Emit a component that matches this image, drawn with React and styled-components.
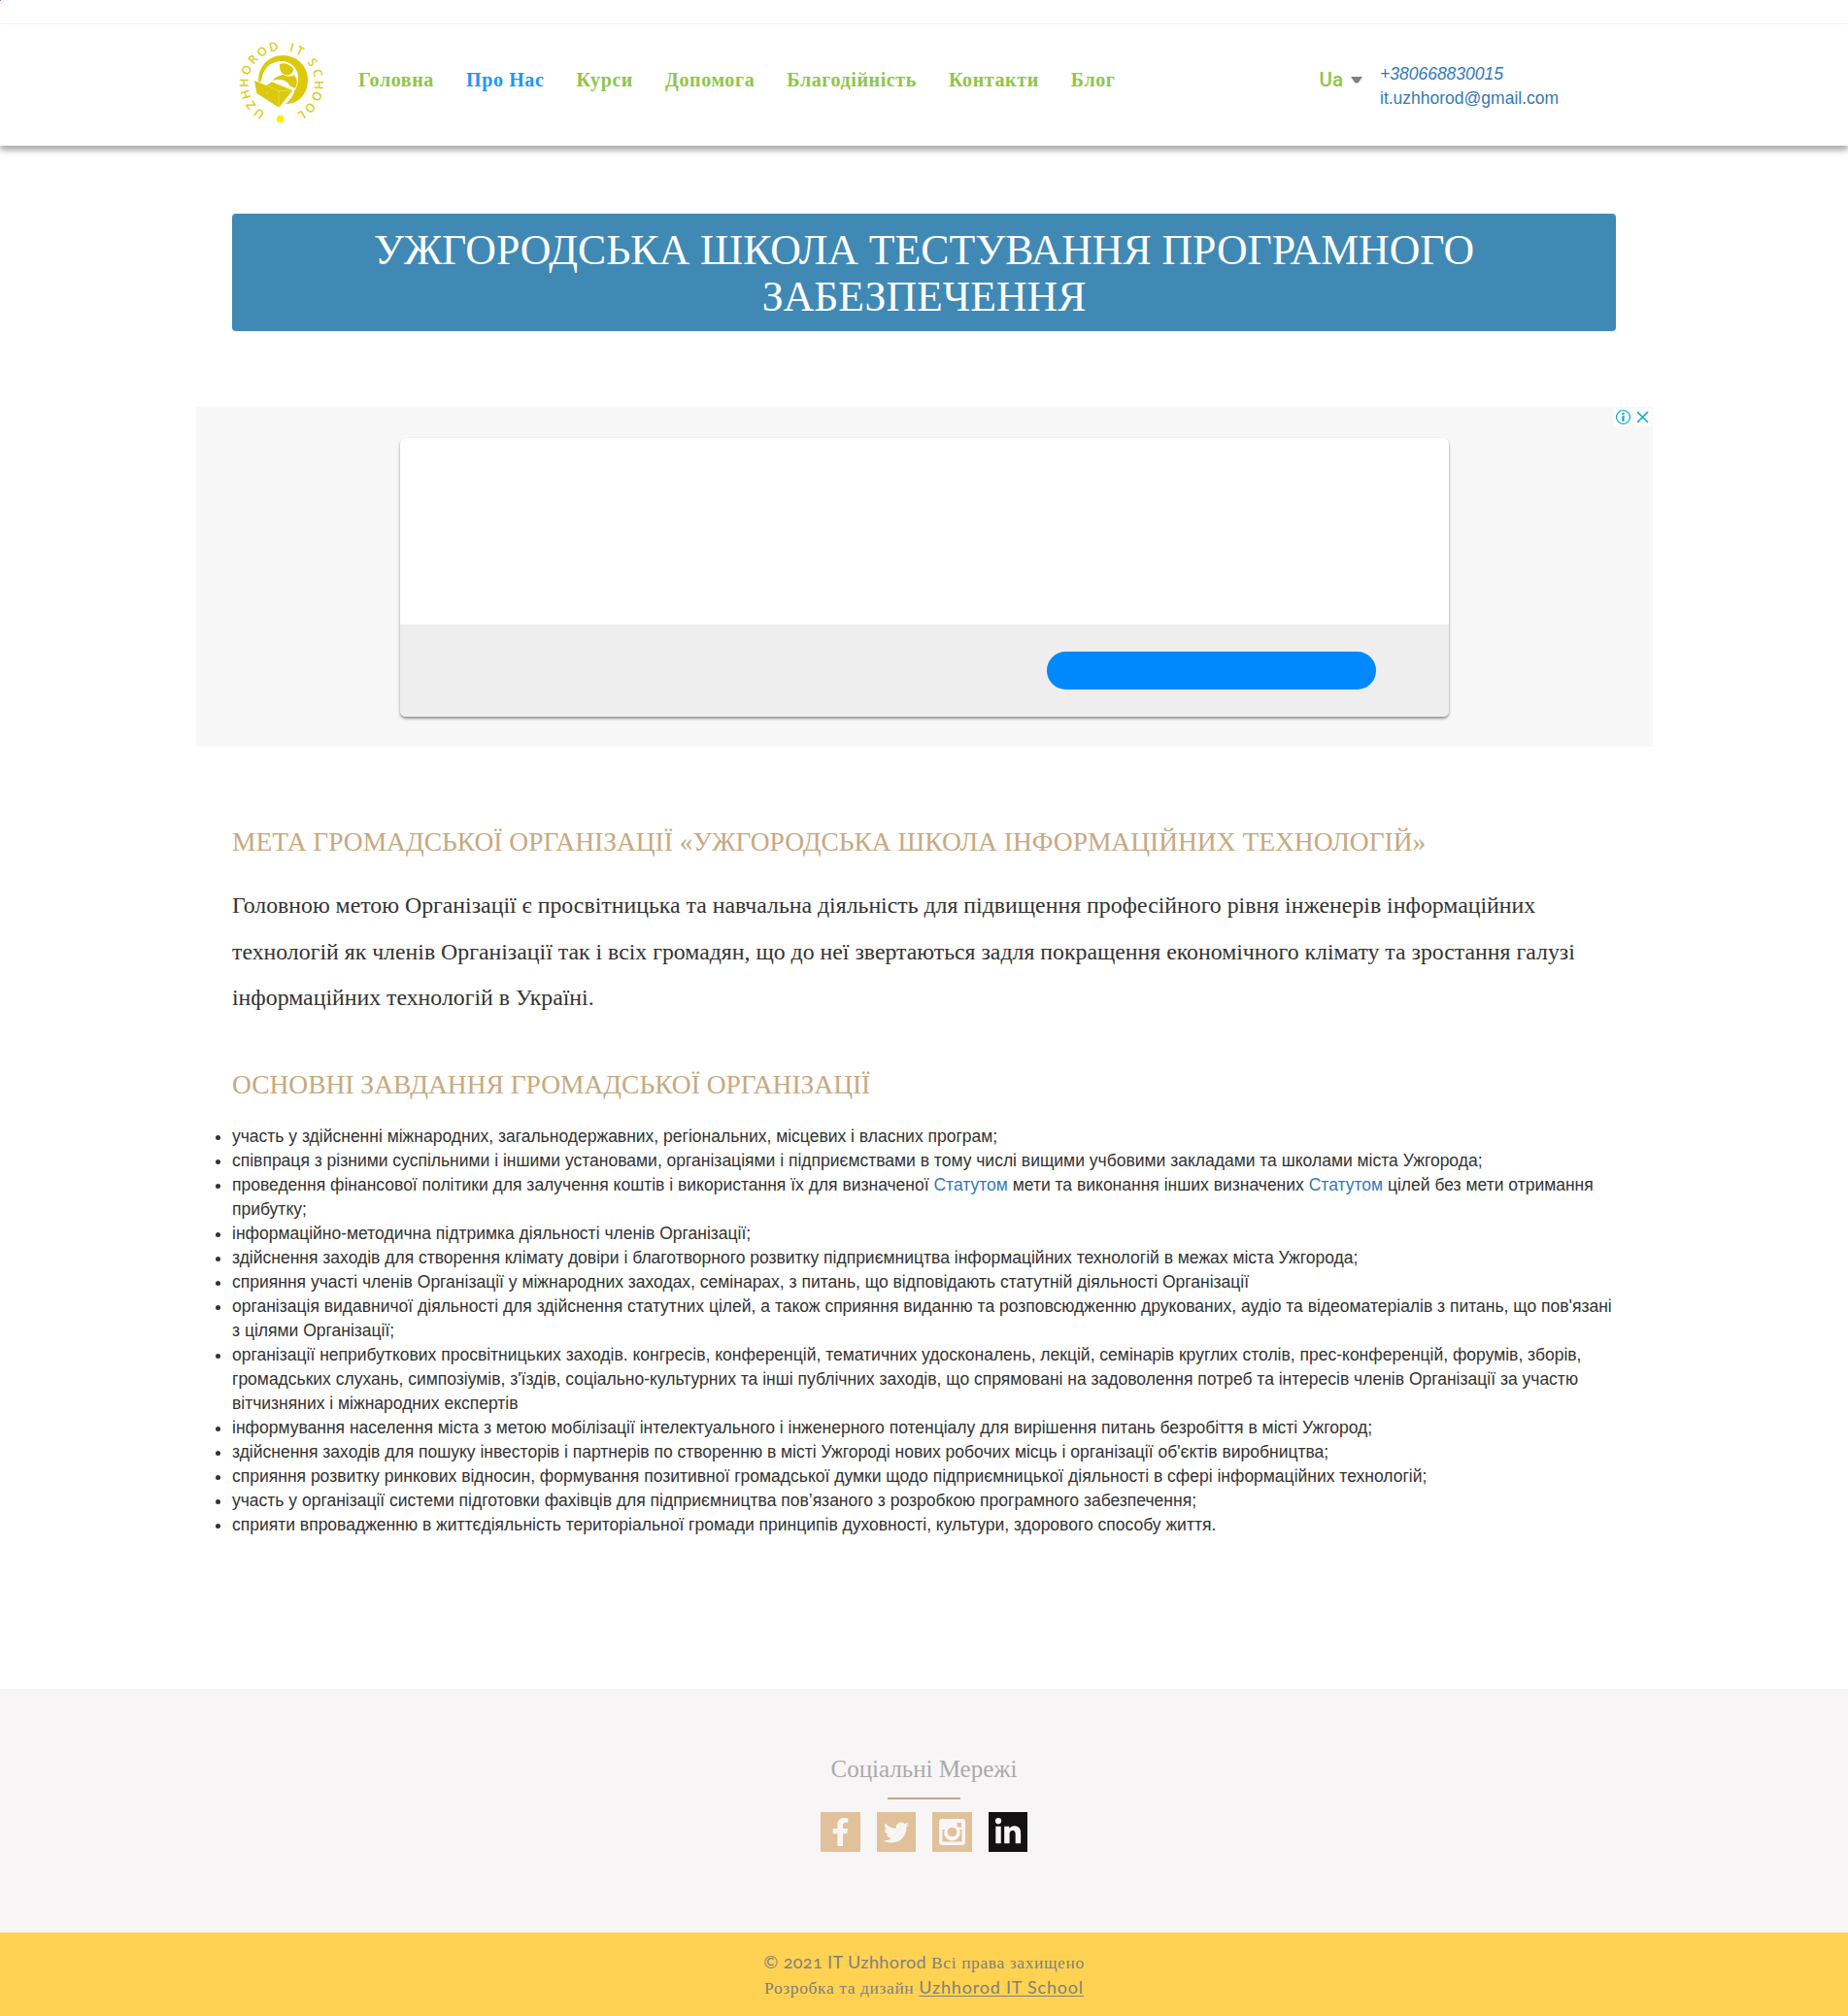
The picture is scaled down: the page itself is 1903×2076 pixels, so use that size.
import React from 'react';
import styled, { createGlobalStyle } from 'styled-components';
import { FaFacebookF, FaTwitter, FaLinkedinIn } from 'react-icons/fa';

const serif = `'Liberation Serif', 'Times New Roman', serif`;
const sans = `'Liberation Sans', Arial, sans-serif`;

const GlobalStyle = createGlobalStyle`
  *, *::before, *::after { box-sizing: border-box; }
  body { margin: 0; background: #fff; color: #333; font: 17.5px/25px ${sans}; }
  a { color: #337ab7; text-decoration: none; }
  h1, h2, h3, p, ul { margin: 0; font-weight: 400; }
`;

const Page = styled.div`
  display: flex;
  flex-direction: column;
  height: 2076px;
  overflow: hidden;
`;

const TopStrip = styled.div`
  flex: none;
  height: 25px;
  border-bottom: 1px solid #f8f8f8;
`;

const Marker = styled.div`
  width: 1px;
  height: 1px;
  background: #c04cff;
`;

const Header = styled.header`
  display: flex;
  flex: none;
  height: 125px;
  padding: 0 239px 0 244px;
  box-shadow: 0 5px 6px rgba(0, 0, 0, 0.32);
`;

const LogoSvg = styled.svg`
  flex: none;
  width: 92px;
  height: 92px;
  margin-top: 14.5px;
`;

const LogoLetter = styled.text`
  font: 600 12.5px 'Open Sans', sans-serif;
  fill: #dccb22;
  text-anchor: middle;
`;

const Nav = styled.nav`
  display: flex;
  gap: 33.1px;
  margin: 43.5px 0 0 33px;
`;

const NavLink = styled.a`
  font: 700 20px/26px ${serif};
  letter-spacing: 0.6px;
  white-space: nowrap;
  && { color: ${(p) => (p.$active ? '#2196f3' : '#8fc549')}; }
`;

const Language = styled.div`
  display: flex;
  align-items: flex-start;
  gap: 8px;
  margin: 44px 18px 0 auto;
  font: 500 20.5px/26px Roboto, sans-serif;
  color: #8fc549;
`;

const Caret = styled.svg`
  width: 12px;
  height: 7px;
  margin-top: 10px;
`;

const Contacts = styled.div`
  display: flex;
  flex-direction: column;
  width: 243px;
  margin-top: 39px;
`;

const Phone = styled.a`
  font-style: italic;
`;

const Column = styled.main`
  width: 1425px;
  margin: 70px auto 0;
  flex: 1;
`;

const Banner = styled.h1`
  height: 121px;
  padding: 12.5px 60px;
  border-radius: 4px;
  background: #4089b5;
  color: #fff;
  font: 43.75px/48.125px ${serif};
  text-align: center;
  text-transform: uppercase;
`;

const Ad = styled.section`
  position: relative;
  width: 1500px;
  height: 350px;
  margin: 78px 0 0 -37px;
  padding: 32px 210px;
  background: #f7f7f7;
`;

const AdCard = styled.div`
  display: flex;
  flex-direction: column;
  justify-content: flex-end;
  height: 287px;
  border-radius: 6px;
  background: #fff;
  box-shadow: 0 2px 3px rgba(0, 0, 0, 0.42);
  overflow: hidden;
`;

const AdFooter = styled.div`
  display: flex;
  justify-content: flex-end;
  height: 95px;
  padding: 28px 75px 0;
  background: #eee;
`;

const AdButton = styled.div`
  width: 339px;
  height: 39px;
  border-radius: 20px;
  background: #08f;
`;

const AdControls = styled.div`
  position: absolute;
  top: 1px;
  right: 1px;
  display: flex;
  gap: 1px;
`;

const AdControl = styled.svg`
  width: 19px;
  height: 19px;
  background: #fff;
  fill: none;
  stroke: #00aecd;
`;

const SectionTitle = styled.h2`
  margin-top: ${(p) => p.$top}px;
  color: #c7a97f;
  font: 27.5px/30.25px ${serif};
  letter-spacing: -0.015px;
  text-transform: uppercase;
  white-space: nowrap;
`;

const Lead = styled.p`
  margin-top: 27px;
  font: 23.8px/47.6px ${serif};
`;

const Tasks = styled.ul`
  margin-top: 26px;
  padding: 0;
`;

const Social = styled.section`
  display: flex;
  flex: none;
  flex-direction: column;
  align-items: center;
  height: 251px;
  padding-top: 69px;
  background: #f7f5f6;
`;

const SocialTitle = styled.h3`
  color: #aaa;
  font: 25px/27.5px ${serif};
`;

const Divider = styled.div`
  width: 75px;
  height: 2px;
  margin-top: 15.5px;
  background: #c5a97b;
`;

const SocialList = styled.div`
  display: flex;
  gap: 17px;
  margin-top: 13px;
`;

const SocialIcon = styled.a`
  display: flex;
  align-items: center;
  justify-content: center;
  width: 40.5px;
  height: 41px;
  background: ${(p) => (p.$dark ? '#141112' : '#e1c199')};
  && { color: #f7f5f6; }
`;

const Footer = styled.footer`
  display: flex;
  flex: none;
  flex-direction: column;
  align-items: center;
  height: 86px;
  padding-top: 17.5px;
  background: #ffd351;
  color: #808080;
  font: 17.5px/26.25px ${serif};
  letter-spacing: 0.6px;
`;

const FooterLine = styled.p`
  height: 26.25px;
  white-space: nowrap;
`;

const Latin = styled.span`
  font-family: Lato, sans-serif;
  font-size: 18px;
  line-height: 1;
  font-feature-settings: 'onum';
  letter-spacing: 0.4px;
`;

const SchoolLink = styled.a`
  && { color: #808080; }
  font-family: Lato, sans-serif;
  font-size: 18px;
  line-height: 1;
  letter-spacing: 0.8px;
  text-decoration: underline;
  text-underline-offset: 2px;
`;

const ring = [
  ['U', 36.6], ['Z', 55], ['H', 73], ['H', 91], ['O', 111], ['R', 130], ['O', 148.4], ['D', 167.7],
  ['I', 196], ['T', 209.7],
  ['S', 235.5], ['C', 253.5], ['H', 272.5], ['O', 290], ['O', 310.5], ['L', 327.6],
];

function Logo() {
  return (
    <LogoSvg viewBox="0 0 92 92">
      {ring.map(([letter, angle], i) => (
        <LogoLetter key={i} x="0" y="-34.2" transform={`translate(46 46) rotate(${angle - 180})`}>
          {letter}
        </LogoLetter>
      ))}
      <g transform="translate(-14 -40) scale(0.33333)" fill="#dcc90c">
        <path d="M109 252C106 204 143 171 184 171C228 171 261 205 261 246C261 291 232 321 193 321C210 304 217 293 219 281C234 262 236 232 222 210C211 194 192 187 174 189C141 191 121 218 118 247L114 254Z" />
        <path d="M174 198C188 193 205 198 217 213C215 228 204 234 194 232C180 229 173 219 174 198Z" />
        <path d="M152 249C160 238 174 231 187 231C195 237 210 237 218 232C230 244 230 262 221 273L205 265C200 253 188 247 176 246C166 245 159 247 152 249Z" />
        <path d="M96 249L133 264L150 253L214 279L172 332L103 288Z" />
        <path d="M133 264L171 281L212 279M171 282V330" fill="none" stroke="#eee48a" strokeWidth="1.6" />
        <circle cx="135" cy="287" r="2" fill="#eee48a" />
        <circle cx="176" cy="368" r="11.5" fill="#fe0" />
      </g>
    </LogoSvg>
  );
}

const nav = ['Головна', 'Про Нас', 'Курси', 'Допомога', 'Благодійність', 'Контакти', 'Блог'];

const statute = <a href="#statute">Статутом</a>;

const tasks = [
  'участь у здійсненні міжнародних, загальнодержавних, регіональних, місцевих і власних програм;',
  'співпраця з різними суспільними і іншими установами, організаціями і підприємствами в тому числі вищими учбовими закладами та школами міста Ужгорода;',
  <>проведення фінансової політики для залучення коштів і використання їх для визначеної {statute} мети та виконання інших визначених {statute} цілей без мети отримання прибутку;</>,
  'інформаційно-методична підтримка діяльності членів Організації;',
  'здійснення заходів для створення клімату довіри і благотворного розвитку підприємництва інформаційних технологій в межах міста Ужгорода;',
  'сприяння участі членів Організації у міжнародних заходах, семінарах, з питань, що відповідають статутній діяльності Організації',
  "організація видавничої діяльності для здійснення статутних цілей, а також сприяння виданню та розповсюдженню друкованих, аудіо та відеоматеріалів з питань, що пов'язані з цілями Організації;",
  "організації неприбуткових просвітницьких заходів. конгресів, конференцій, тематичних удосконалень, лекцій, семінарів круглих столів, прес-конференцій, форумів, зборів, громадських слухань, симпозіумів, з'їздів, соціально-культурних та інші публічних заходів, що спрямовані на задоволення потреб та інтересів членів Організації за участю вітчизняних і міжнародних експертів",
  'інформування населення міста з метою мобілізації інтелектуального і інженерного потенціалу для вирішення питань безробіття в місті Ужгород;',
  "здійснення заходів для пошуку інвесторів і партнерів по створенню в місті Ужгороді нових робочих місць і організації об'єктів виробництва;",
  'сприяння розвитку ринкових відносин, формування позитивної громадської думки щодо підприємницької діяльності в сфері інформаційних технологій;',
  'участь у організації системи підготовки фахівців для підприємництва пов’язаного з розробкою програмного забезпечення;',
  'сприяти впровадженню в життєдіяльність територіальної громади принципів духовності, культури, здорового способу життя.',
];

export default function App() {
  return (
    <Page>
      <GlobalStyle />
      <TopStrip><Marker /></TopStrip>
      <Header>
        <Logo />
        <Nav>
          {nav.map((label) => (
            <NavLink key={label} href="#" $active={label === 'Про Нас'}>{label}</NavLink>
          ))}
        </Nav>
        <Language>
          Ua
          <Caret viewBox="0 0 12 7"><path d="M0 0H12L7.5 6.5H4.5Z" fill="#808080" /></Caret>
        </Language>
        <Contacts>
          <Phone href="tel:+380668830015">+380668830015</Phone>
          <a href="mailto:it.uzhhorod@gmail.com">it.uzhhorod@gmail.com</a>
        </Contacts>
      </Header>

      <Column>
        <Banner>Ужгородська школа тестування програмного забезпечення</Banner>
        <Ad>
          <AdCard>
            <AdFooter><AdButton /></AdFooter>
          </AdCard>
          <AdControls>
            <AdControl viewBox="0 0 19 19">
              <circle cx="9.5" cy="9.5" r="7" strokeWidth="1.2" />
              <path d="M9.5 8.2V14M9.5 5V7.2" strokeWidth="2.2" />
            </AdControl>
            <AdControl viewBox="0 0 19 19">
              <path d="M4 4L15 15M15 4L4 15" strokeWidth="1.6" />
            </AdControl>
          </AdControls>
        </Ad>
        <SectionTitle $top={83}>Мета громадської організації «Ужгородська школа інформаційних технологій»</SectionTitle>
        <Lead>
          Головною метою Організації є просвітницька та навчальна діяльність для підвищення професійного рівня інженерів інформаційних
          технологій як членів Організації так і всіх громадян, що до неї звертаються задля покращення економічного клімату та зростання галузі
          інформаційних технологій в Україні.
        </Lead>
        <SectionTitle $top={50}>Основні завдання громадської організації</SectionTitle>
        <Tasks>
          {tasks.map((task, i) => <li key={i}>{task}</li>)}
        </Tasks>
      </Column>

      <Social>
        <SocialTitle>Соціальні Мережі</SocialTitle>
        <Divider />
        <SocialList>
          <SocialIcon href="#facebook"><FaFacebookF size={29} /></SocialIcon>
          <SocialIcon href="#twitter"><FaTwitter size={26} /></SocialIcon>
          <SocialIcon href="#instagram">
            <svg width="27" height="27" viewBox="0 0 27 27">
              <path fillRule="evenodd" fill="currentColor" d="M3 0H24Q27 0 27 3V24Q27 27 24 27H3Q0 27 0 24V3Q0 0 3 0ZM18.5 4V8.5H23V4ZM3.5 11V23.5H23.5V11H21A8.2 8.2 0 1 1 6 11Z" />
              <circle cx="13.5" cy="13.5" r="6.3" fill="none" stroke="currentColor" strokeWidth="3" />
              <circle cx="13.5" cy="13.5" r="4.8" fill="#e1c199" />
            </svg>
          </SocialIcon>
          <SocialIcon href="#linkedin" $dark><FaLinkedinIn size={30} /></SocialIcon>
        </SocialList>
      </Social>

      <Footer>
        <FooterLine><Latin>© 2021 IT Uzhhorod</Latin> Всі права захищено</FooterLine>
        <FooterLine>Розробка та дизайн <SchoolLink href="#school">Uzhhorod IT School</SchoolLink></FooterLine>
      </Footer>
    </Page>
  );
}
